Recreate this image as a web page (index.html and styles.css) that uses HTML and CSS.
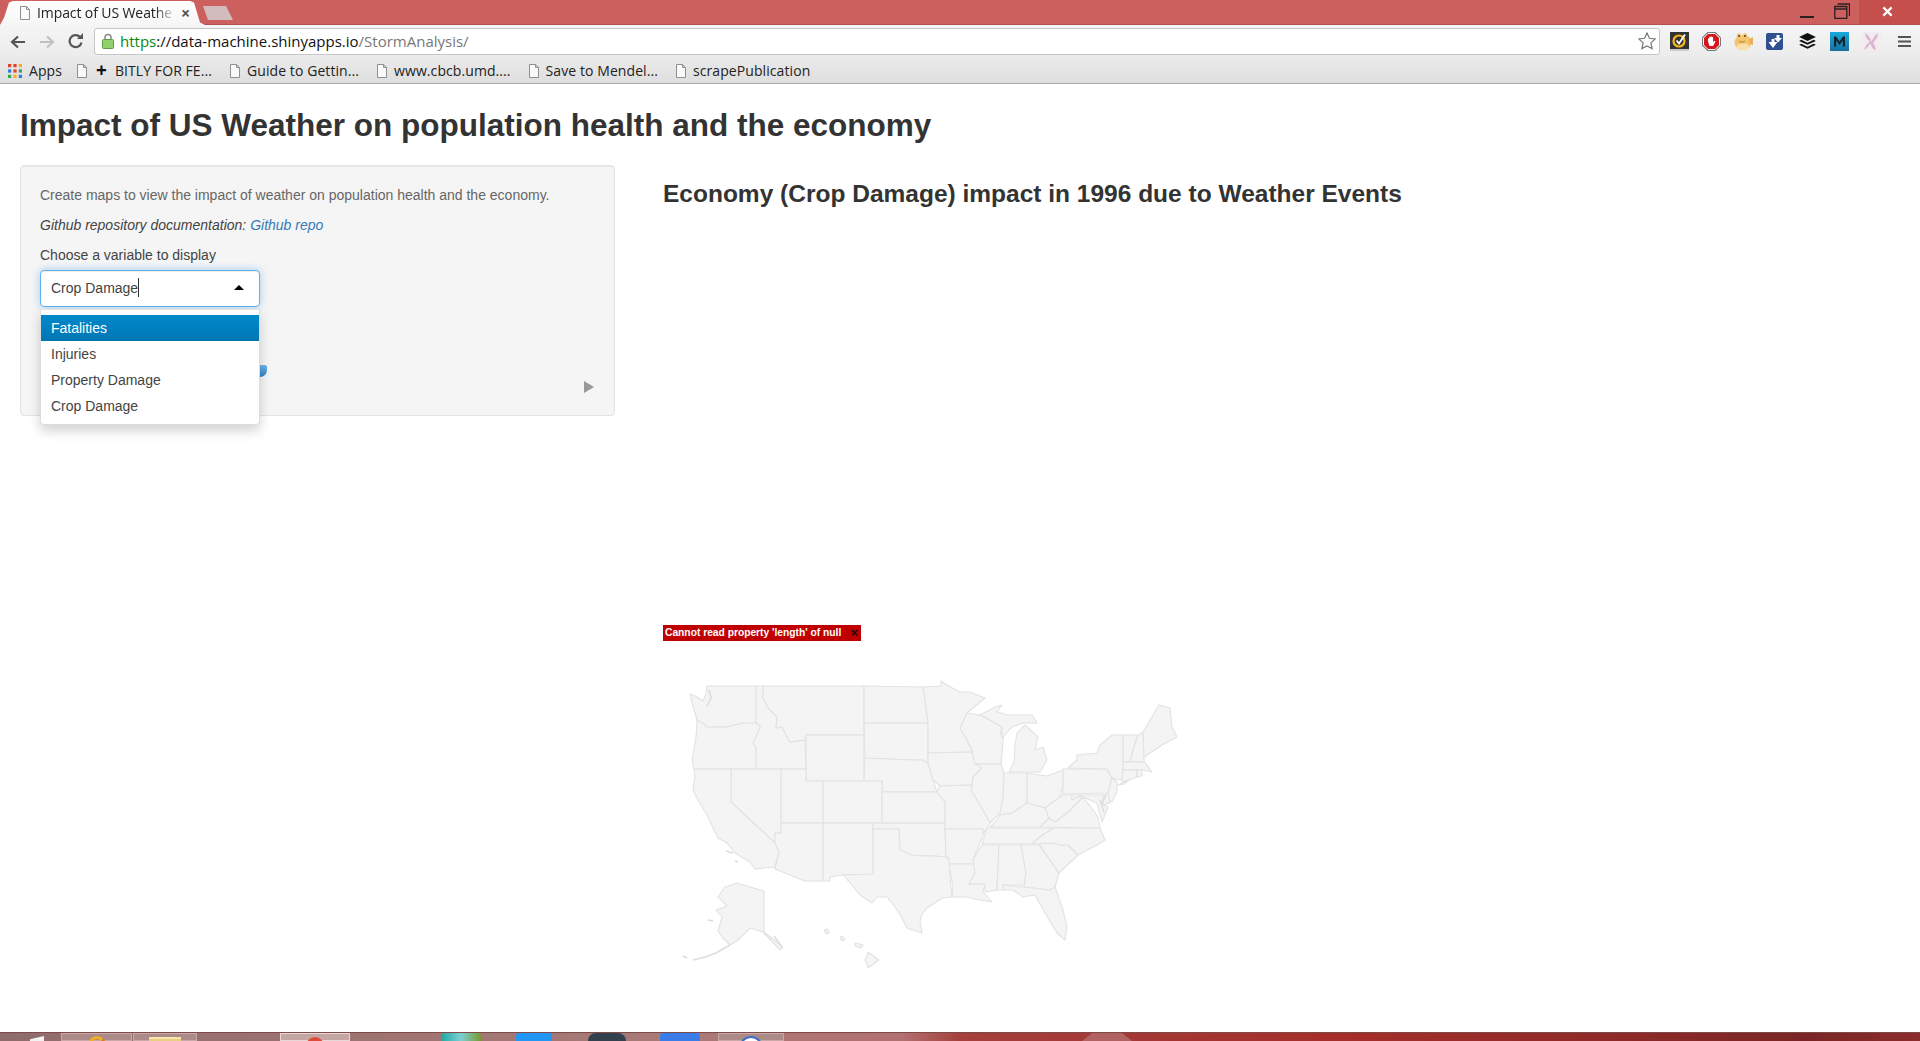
FILE: index.html
```html
<!DOCTYPE html>
<html lang="en">
<head>
<meta charset="utf-8">
<title>Impact of US Weather on population health and the economy</title>
<link rel="stylesheet" href="styles.css">
</head>
<body>
<div class="browser">
  <header class="titlebar">
    <div class="tab">
      <svg class="page-icon tab-page" viewBox="0 0 12 14"><path d="M1.5.5h6l3 3v10h-9z M7.5.5v3h3"/></svg>
      <span class="tab-title">Impact of US Weathe</span>
      <span class="tab-close">×</span>
    </div>
    <div class="newtab"></div>
    <div class="winctl">
      <span class="win-min"></span>
      <svg class="win-max" viewBox="0 0 16 16"><path d="M3.5 1h12v12M.8 3.5h12v12H.8zM.8 6h12" /></svg>
      <span class="win-close"><svg viewBox="0 0 12 12"><path d="M1.5 1.5l9 9M10.5 1.5l-9 9"/></svg></span>
    </div>
  </header>

  <nav class="toolbar">
    <svg class="nav nav-back" viewBox="0 0 16 14"><path d="M15 7H3M8 1.500 2 7l6 5.500"/></svg>
    <svg class="nav nav-fwd" viewBox="0 0 16 14"><path d="M1 7h12M8 1.500 14 7l-6 5.500"/></svg>
    <svg class="nav nav-reload" viewBox="0 0 16 16"><path d="M13.500 9.500A6 6 0 1 1 12 4"/><path class="solid" d="M9 6h6V0z"/></svg>
    <div class="omnibox">
      <svg class="lock" viewBox="0 0 12 16"><path class="lock-shackle" d="M3 7V4.500a3 3 0 0 1 6 0V7"/><rect class="lock-body" x=".5" y="6.500" width="11" height="9" rx="1"/></svg>
      <span class="url"><span class="url-https">https</span>://data-machine.shinyapps.io<span class="url-path">/StormAnalysis/</span></span>
      <svg class="star" viewBox="0 0 18 18"><path d="M9 1l2.400 5.300 5.800.7-4.300 3.900 1.200 5.700L9 13.900l-5.100 2.700 1.200-5.700L.8 7l5.800-.7z"/></svg>
    </div>
    <div class="extensions">
      <svg class="ext" viewBox="0 0 19 19"><rect width="19" height="17" fill="#333"/><rect y="17" width="19" height="2" fill="#ccc"/><circle cx="9" cy="9" r="5.500" fill="none" stroke="#f5b81c" stroke-width="2.200"/><path d="M6.500 8.500l2.500 3 6-9" fill="none" stroke="#fff" stroke-width="1.800"/></svg>
      <svg class="ext" viewBox="0 0 19 19"><path d="M5.500 0h8L19 5.500v8L13.500 19h-8L0 13.500v-8z" fill="#777"/><path d="M6 1.500h7L17.500 6v7L13 17.500H6L1.500 13V6z" fill="#d8151c" stroke="#fff"/><path d="M6 9.500V6.500h1.200v2V5h1.300v3V4.500h1.300V8V5h1.300v5l1.500-1.300.9.700-2.400 4.600H7.500z" fill="#fff"/></svg>
      <svg class="ext" viewBox="0 0 19 19"><ellipse cx="9" cy="10.500" rx="8.500" ry="7.500" fill="#f4c56c"/><ellipse cx="9" cy="15" rx="6.500" ry="3.500" fill="#f9e0ac"/><circle cx="5" cy="3.500" r="2.200" fill="#f4c56c"/><circle cx="11" cy="3.500" r="2.200" fill="#f4c56c"/><circle cx="5" cy="4" r="1" fill="#543"/><circle cx="11" cy="4" r="1" fill="#543"/><path d="M15 7l4-2v8l-3-1z" fill="#e8b05a"/><path d="M5 9c2 1.500 4 1.500 6 0" fill="none" stroke="#b07c30"/></svg>
      <svg class="ext ext-s" viewBox="0 0 17 17"><rect width="17" height="17" rx="2" fill="#2f4f8f"/><path d="M2.500 9h3V6h3v3h3l-4.500 6zM8 5h2.500V2h3v3H16l-4 4.500z" fill="#fff"/></svg>
      <svg class="ext" viewBox="0 0 17 17"><path d="M8.500 1L16 4.500 8.500 8 1 4.500z" fill="#111"/><path d="M3 7l5.500 2.700L14 7l2 1-7.500 3.500L1 8z" fill="#111"/><path d="M3 10.500l5.500 2.700 5.500-2.700 2 1L8.500 15 1 11.500z" fill="#111"/></svg>
      <svg class="ext" viewBox="0 0 19 19"><defs><linearGradient id="mg" x1="0" y1="0" x2="0" y2="1"><stop offset="0" stop-color="#19a8dc"/><stop offset="1" stop-color="#1a6f9c"/></linearGradient></defs><rect width="19" height="19" fill="url(#mg)"/><path d="M4 14.500V4.500h2l3.500 5 3.500-5h2v10h-2.200V8.500L9.500 13 6.200 8.500v6z" fill="#123"/></svg>
      <svg class="ext" viewBox="0 0 18 18"><rect width="18" height="18" fill="#f1ecef"/><path d="M3 1c3 2 5 5 6 8 2-3 3-6 6-8 0 4-2 7-4.500 9 1 2 2.500 4 2.500 7-3 0-4-3-5-6-2 2-3 5-6 6 1-4 3-6 5.500-8C5 7 3 5 3 1z" fill="#dcb4d4"/></svg>
      <svg class="menu-icon" viewBox="0 0 13 13"><path d="M0 2h13M0 6.500h13M0 11h13"/></svg>
    </div>
  </nav>

  <nav class="bookmarks">
    <span class="bm bm-apps">
      <svg class="apps-icon" viewBox="0 0 13 13">
        <rect width="3" height="3" fill="#e0452c"/><rect x="5" width="3" height="3" fill="#e0452c"/><rect x="10" width="3" height="3" fill="#f2b01e"/>
        <rect y="5" width="3" height="3" fill="#2f7de1"/><rect x="5" y="5" width="3" height="3" fill="#e0452c"/><rect x="10" y="5" width="3" height="3" fill="#34a853"/>
        <rect y="10" width="3" height="3" fill="#34a853"/><rect x="5" y="10" width="3" height="3" fill="#f2b01e"/><rect x="10" y="10" width="3" height="3" fill="#2f7de1"/>
      </svg>Apps</span>
    <span class="bm"><svg class="page-icon" viewBox="0 0 12 14"><path d="M1.500.5h6l3 3v10h-9z M7.500.5v3h3"/></svg><b class="plus">+</b>BITLY FOR FE...</span>
    <span class="bm"><svg class="page-icon" viewBox="0 0 12 14"><path d="M1.500.5h6l3 3v10h-9z M7.500.5v3h3"/></svg>Guide to Gettin...</span>
    <span class="bm"><svg class="page-icon" viewBox="0 0 12 14"><path d="M1.500.5h6l3 3v10h-9z M7.500.5v3h3"/></svg>www.cbcb.umd....</span>
    <span class="bm"><svg class="page-icon" viewBox="0 0 12 14"><path d="M1.500.5h6l3 3v10h-9z M7.500.5v3h3"/></svg>Save to Mendel...</span>
    <span class="bm"><svg class="page-icon" viewBox="0 0 12 14"><path d="M1.500.5h6l3 3v10h-9z M7.500.5v3h3"/></svg>scrapePublication</span>
  </nav>

  <main class="page">
    <h1 class="app-title">Impact of US Weather on population health and the economy</h1>
    <div class="app-row">
      <aside class="panel">
        <p class="help">Create maps to view the impact of weather on population health and the economy.</p>
        <p class="docs">Github repository documentation: <a class="repo" href="#">Github repo</a></p>
        <label class="field-label">Choose a variable to display</label>
        <div class="select-wrap">
          <div class="select-box"><span class="select-value">Crop Damage</span><span class="cursor"></span><span class="caret"></span></div>
          <ul class="dropdown">
            <li class="option active">Fatalities</li>
            <li class="option">Injuries</li>
            <li class="option">Property Damage</li>
            <li class="option">Crop Damage</li>
          </ul>
        </div>
        <div class="slider"><span class="slider-handle"></span></div>
        <div class="play-row"><span class="play"></span></div>
      </aside>
      <section class="plot">
        <h3 class="plot-title">Economy (Crop Damage) impact in 1996 due to Weather Events</h3>
        <div class="error-bar"><span class="error-text">Cannot read property 'length' of null</span><span class="error-x">×</span></div>
        <svg class="map" viewBox="663 670 540 310" width="540" height="310">
          <g class="states">
            <path d="M707 686L756 686L756 723L760 725L743 723L727 727L712 727L707 727L703 723L697 720L695 713L693 707L690 694L697 697L703 701L706 694z"/>
            <path d="M697 720L703 723L707 727L727 727L743 723L756 723L760 726L760 728L753 743L756 747L756 769L694 769L692 760L694 749L696 737z"/>
            <path d="M756 686L763 686L763 698L769 709L777 717L776 728L782 727L786 735L790 742L805 740L806 769L756 769L756 747L753 743L760 728L760 725L756 723z"/>
            <path d="M763 686L864 686L864 735L806 735L805 740L790 742L786 735L782 727L776 728L777 717L769 709L763 698z"/>
            <path d="M806 735L864 735L864 781L806 781z"/>
            <path d="M864 686L923 687L925 700L928 723L864 723z"/>
            <path d="M864 723L928 723L928 753L928 763L922 760L912 760L865 758z"/>
            <path d="M865 758L912 760L922 760L928 763L933 780L937 792L882 792L882 781L864 781z"/>
            <path d="M823 781L882 781L882 823L823 823z"/>
            <path d="M781 769L806 769L806 781L823 781L823 823L781 823z"/>
            <path d="M731 769L781 769L781 833L775 833L775 843L731 802z"/>
            <path d="M694 769L731 769L731 802L775 843L779 852L775 867L755 869L750 862L743 858L735 853L727 843L718 838L713 828L707 815L698 800L693 790L695 777z"/>
            <path d="M781 823L823 823L823 881L805 881L775 869L779 852L775 843L775 833L781 833z"/>
            <path d="M823 823L873 823L873 874L843 875L830 877L830 881L823 881z"/>
            <path d="M873 823L945 823L946 857L935 856L923 856L912 855L900 850L899 829L873 829z"/>
            <path d="M882 792L937 792L945 802L945 823L882 823z"/>
            <path d="M873 829L899 829L900 850L912 855L923 856L935 856L946 857L950 860L950 877L952 897L942 898L927 908L922 914L920 922L922 933L907 928L901 916L895 907L887 897L877 897L872 903L860 895L852 885L843 875L873 874z"/>
            <path d="M923 687L941 686L941 681L945 684L960 692L970 692L985 698L967 713L960 728L966 738L972 750L972 752L928 753L928 723L925 700z"/>
            <path d="M928 753L972 752L982 768L973 777L972 785L940 786L933 780L928 763z"/>
            <path d="M967 713L980 715L990 720L1002 727L1000 735L1004 730L1003 742L1001 764L975 764L972 752L972 750L966 738L960 728z"/>
            <path d="M975 764L1001 764L1004 773L1003 798L1000 813L990 823L980 805L971 790L972 785L973 777L982 768z"/>
            <path d="M1004 773L1027 773L1027 803L1012 813L1000 815L1000 813L1003 798z"/>
            <path d="M1027 773L1047 776L1063 770L1063 785L1060 797L1045 808L1027 803z"/>
            <path d="M1009 772L1040 772L1047 760L1043 747L1035 750L1038 737L1025 725L1017 733L1015 745L1014 762z"/>
            <path d="M980 715L995 707L1002 705L997 712L1008 715L1032 715L1037 723L1023 723L1012 727L1002 738L1002 727L990 720z"/>
            <path d="M940 786L972 785L971 790L980 805L990 823L983 834L983 829L945 829L945 802L937 792z"/>
            <path d="M945 829L983 829L983 835L973 860L974 864L949 864L949 857L946 857z"/>
            <path d="M949 864L974 864L975 873L969 884L985 884L983 892L992 902L975 899L967 897L952 897L953 887z"/>
            <path d="M982 845L999 845L997 890L985 892L985 884L969 884L975 873L973 860z"/>
            <path d="M999 845L1021 845L1026 873L1024 885L1003 885L1004 890L997 890z"/>
            <path d="M1021 845L1039 845L1059 873L1055 887L1050 890L1024 887L1026 873z"/>
            <path d="M1003 885L1024 887L1050 890L1055 887L1063 910L1067 927L1065 940L1057 933L1045 913L1035 895L1023 897L1013 890L1004 890z"/>
            <path d="M1039 844L1053 843L1060 845L1068 845L1078 855L1059 873z"/>
            <path d="M987 828L1053 828L1040 837L1032 844L982 844z"/>
            <path d="M1053 828L1100 828L1105 840L1097 845L1078 855L1068 845L1060 845L1053 843L1032 844L1040 837z"/>
            <path d="M1040 827L1049 818L1055 822L1068 812L1083 797L1093 810L1098 817L1100 828z"/>
            <path d="M990 827L1040 827L1049 818L1045 808L1027 803L1012 813L1000 815L995 822z"/>
            <path d="M1045 808L1060 797L1063 795L1072 795L1072 800L1080 796L1083 797L1068 812L1055 822L1049 818z"/>
            <path d="M1063 769L1107 769L1112 778L1108 793L1063 794z"/>
            <path d="M1068 768L1077 760L1077 755L1097 753L1100 745L1112 735L1123 735L1123 770L1122 780L1112 778L1107 769z"/>
            <path d="M1118 785L1132 778L1124 784z"/>
            <path d="M1112 778L1117 782L1117 792L1112 802L1106 798L1108 793z"/>
            <path d="M1105 795L1108 793L1110 803L1103 805L1103 795z"/>
            <path d="M1072 795L1103 795L1103 805L1108 807L1102 822L1097 803L1083 797L1080 796L1072 800z"/>
            <path d="M1123 735L1138 735L1133 750L1130 762L1123 762z"/>
            <path d="M1138 735L1143 732L1144 757L1144 762L1130 762L1133 750z"/>
            <path d="M1143 732L1150 720L1159 705L1170 708L1172 727L1177 737L1162 745L1144 757z"/>
            <path d="M1123 762L1145 762L1152 772L1143 770L1123 770z"/>
            <path d="M1123 770L1137 770L1137 777L1122 782z"/>
            <path d="M1137 770L1142 770L1142 776L1137 777z"/>
            <path d="M737 883L764 891L764 932L783 947L780 950L763 932L750 928L738 940L730 945L722 937L718 931L722 917L716 910L727 906L718 897L725 887z"/>
            <path d="M868 952L879 960L868 968L865 960z"/>
            <path d="M824 931L827 929L829 932L827 934z"/>
            <path d="M841 936L845 939L843 941L840 939z"/>
            <path d="M855 943L863 945L861 948L855 946z"/>
          </g>
          <g class="map-detail">
            <path d="M709 690L711 698L707 706"/>
            <path d="M774 936L782 947"/>
            <path d="M1106 795L1101 805M1100 800L1104 812"/>
            <path d="M730 945L716 953L705 957L693 960M683 956L687 958"/>
            <path d="M708 920L713 921M726 851L733 853M735 861L738 862"/>
          </g>
        </svg>
      </section>
    </div>
  </main>

  <footer class="taskbar">
    <span class="tb-start"></span>
    <span class="tb-btn tb-ie"><i class="ie-arc"></i></span>
    <span class="tb-btn tb-folder"><i class="folder-top"></i></span>
    <span class="tb-btn tb-active"><i class="dot-red"></i></span>
    <span class="tb-gem"></span>
    <span class="tb-blue"></span>
    <span class="tb-dark"></span>
    <span class="tb-blue2"></span>
    <span class="tb-btn tb-last"><i class="dot-white"></i></span>
    <span class="tb-tri"></span>
  </footer>
</div>
</body>
</html>
```
FILE: styles.css
```css
* { box-sizing: border-box; }
html, body { margin: 0; padding: 0; height: 100%; overflow: hidden; background: #fff; }
body { font-family: "Liberation Sans", Arial, sans-serif; font-size: 14px; line-height: 20px; color: #333; }

.browser { height: 1041px; width: 1920px; display: flex; flex-direction: column; }

/* title bar */
.titlebar { height: 25px; flex: none; background: #cc605e; display: flex; align-items: flex-end; position: relative; border-bottom: 1px solid #b05452; }
.tab { width: 205px; height: 24px; margin-bottom: -1px; background: linear-gradient(#fff, #f6f6f6); clip-path: polygon(0 100%, 4px 70%, 9px 6%, 13px 0, 190px 0, 194px 6%, 200px 90%, 205px 100%); display: flex; align-items: center; padding-left: 19px; font-family: "Open Sans", sans-serif; font-size: 14px; color: #222; }
.tab-page { margin-right: 4px; }
.tab-title { width: 139px; white-space: nowrap; overflow: hidden; letter-spacing: -.1px; -webkit-mask-image: linear-gradient(90deg, #000 85%, transparent); mask-image: linear-gradient(90deg, #000 85%, transparent); }
.tab-close { margin-left: 5px; font-size: 16px; font-weight: 700; color: #555; line-height: 1; }
.newtab { width: 30px; height: 14px; margin: 0 0 4px -2px; background: #d3bcbd; clip-path: polygon(0 0, 23px 0, 30px 100%, 5px 100%); }
.winctl { margin-left: auto; align-self: stretch; display: flex; }
.win-min { width: 14px; height: 2px; background: #2b2020; margin: 16px 20px 0 0; }
.win-max { width: 16px; height: 16px; margin: 3px 9px 0 0; fill: none; stroke: #2b2020; stroke-width: 1.300; }
.win-close { width: 61px; height: 24px; background: #c44f4d; display: flex; align-items: center; justify-content: center; padding: 0 5px 2px 0; }
.win-close svg { width: 11px; height: 11px; fill: none; stroke: #fff; stroke-width: 2.400; }

/* toolbar */
.toolbar { height: 31px; flex: none; background: linear-gradient(#f5f5f5, #ececec); display: flex; align-items: center; padding: 1px 0 0 10px; }
.nav { fill: none; stroke-width: 2.200; }
.nav-back { width: 16px; height: 14px; stroke: #555; margin-top: 1px; }
.nav-fwd { width: 16px; height: 14px; stroke: #c0c0c0; margin: 1px 0 0 13px; }
.nav-reload { width: 16px; height: 16px; stroke: #555; margin: 0 0 0 13px; }
.solid { fill: #555; stroke: none; }
.omnibox { width: 1566px; height: 27px; margin: 0 0 0 10px; background: #fff; border: 1px solid #c6c6c6; border-radius: 3px; display: flex; align-items: center; padding-left: 7px; }
.lock { width: 12px; height: 16px; flex: none; }
.lock-shackle { fill: none; stroke: #8a8a8a; stroke-width: 1.500; }
.lock-body { fill: #8ed06a; stroke: #5f9e45; }
.url { margin-left: 6px; font-family: "Open Sans", sans-serif; font-size: 15px; color: #111; }
.url-https { color: #0a8a0a; }
.url-path { color: #777; }
.star { width: 18px; height: 18px; margin-left: auto; margin-right: 3px; fill: #fff; stroke: #777; stroke-width: 1.200; }
.extensions { display: flex; align-items: center; margin-left: 10px; }
.ext { width: 19px; height: 19px; margin-right: 13px; flex: none; }
.ext-s { width: 17px; height: 17px; margin-right: 15px; }
.menu-icon { width: 13px; height: 13px; margin-left: 4px; stroke: #555; stroke-width: 2.200; }

/* bookmarks */
.bookmarks { height: 28px; flex: none; background: linear-gradient(#ebebeb, #dedede); border-bottom: 1px solid #a8a8a8; display: flex; align-items: center; padding: 2px 0 0 8px; font-family: "Open Sans", sans-serif; font-size: 14px; letter-spacing: .08px; color: #222; white-space: nowrap; }
.bm { display: flex; align-items: center; margin-right: 17px; }
.bm-apps { margin-right: 14px; }
.apps-icon { width: 14px; height: 14px; margin-right: 7px; }
.page-icon { width: 12px; height: 14px; margin-right: 6px; flex: none; fill: #fafafa; stroke: #8f8f8f; stroke-width: 1; }
.plus { font-size: 19px; font-weight: 700; color: #111; margin: 0 8px 0 2px; line-height: 1; }

/* page */
.page { flex: 1; min-height: 0; padding: 0 20px; overflow: hidden; background: #fff; }
.app-title { margin: 20px 0 0; font-size: 31.500px; line-height: 42px; font-weight: 700; color: #333; white-space: nowrap; }
.app-row { display: flex; margin-top: 19px; }
.panel { width: 595px; height: 251px; flex: none; padding: 19px; background: #f5f5f5; border: 1px solid #e3e3e3; border-radius: 4px; box-shadow: inset 0 1px 1px rgba(0,0,0,.05); }
.help { margin: 0 0 10px; color: #666; }
.docs { margin: 0 0 10px; font-style: italic; color: #444; }
.repo { color: #337ab7; text-decoration: none; }
.field-label { display: block; height: 20px; margin: 0 0 5px; color: #444; }
.select-wrap { position: relative; width: 220px; }
.select-box { height: 37px; background: #fff; border: 1px solid #66afe9; border-radius: 4px; box-shadow: inset 0 1px 1px rgba(0,0,0,.075), 0 0 8px rgba(102,175,233,.6); display: flex; align-items: center; padding: 0 0 2px 10px; position: relative; }
.select-value { color: #444; }
.cursor { width: 1px; height: 19px; background: #333; }
.caret { position: absolute; right: 15px; top: 14px; width: 0; height: 0; border-left: 5px solid transparent; border-right: 5px solid transparent; border-bottom: 5px solid #000; }
.dropdown { position: absolute; z-index: 5; left: 0; top: 39px; width: 220px; margin: 0; padding: 5px 0 0; list-style: none; height: 116px; background: #fff; border: 1px solid #ddd; border-top-color: #e4e4e4; border-radius: 0 0 4px 4px; box-shadow: 0 6px 12px rgba(0,0,0,.175); color: #444; }
.option { height: 26px; padding: 3px 10px; line-height: 20px; }
.option.active { color: #fff; background: linear-gradient(#0088cc, #0077b3); }
.slider { height: 12px; margin-top: 58px; padding-left: 213px; }
.slider-handle { display: block; width: 14px; height: 12px; background: linear-gradient(#6fb6ea, #2e7fc4); border-radius: 2px 2px 7px 2px; }
.play-row { display: flex; justify-content: flex-end; margin: 4px 1px 0 0; }
.play { width: 0; height: 0; border-left: 10px solid #999; border-top: 6px solid transparent; border-bottom: 6px solid transparent; }

.plot { margin-left: 48px; width: 600px; }
.plot-title { margin: 14px 0 0; font-size: 24.500px; line-height: 30px; font-weight: 700; color: #333; white-space: nowrap; }
.error-bar { width: 198px; height: 16px; margin-top: 416px; background: #c00000; display: flex; align-items: center; justify-content: space-between; padding: 0 3px 0 2px; font-size: 10.250px; font-weight: 700; line-height: 16px; color: #fff; }
.error-text { white-space: nowrap; }
.error-x { color: #111; font-size: 13px; }
.map { display: block; margin-top: 29px; }
.states path { fill: #f4f4f4; stroke: #e2e2e2; stroke-width: 1.100; stroke-linejoin: round; }
.map-detail path { fill: none; stroke: #dcdcdc; stroke-width: 1.500; }

/* taskbar */
.taskbar { height: 9px; flex: none; overflow: hidden; position: relative; display: flex; align-items: flex-start; border-top: 1px solid #7d4a48; background: linear-gradient(90deg, #8f6c6c 0, #9e7472 20%, #a87a78 35%, #b27070 47%, #a5403c 50%, #a33a36 56%, #a52e2a 70%, #8c2a28 85%, #7a2626 94%, #8c2c2c 100%); }
.tb-start { width: 14px; height: 8px; margin: 3px 0 0 30px; background: #f2f2f2; clip-path: polygon(0 40%, 100% 0, 100% 100%, 0 100%); }
.tb-btn { height: 8px; border: 1px solid #c9a9a7; background: #ab8a88; display: flex; justify-content: center; }
.tb-ie { width: 71px; margin-left: 17px; }
.ie-arc { width: 18px; height: 18px; border-radius: 50%; border: 3px solid #f0b020; border-right-color: #e07a1c; margin-top: 2px; }
.tb-folder { width: 64px; margin-left: 1px; }
.folder-top { width: 32px; height: 8px; margin-top: 3px; background: #e9cf80; border-top: 2px solid #f5e6b0; }
.tb-active { width: 70px; margin-left: 83px; background: #c4a6a2; border-color: #e6d8d6; }
.dot-red { width: 18px; height: 18px; border-radius: 50%; background: #dd4b39; margin-top: 3px; }
.tb-gem { width: 40px; height: 8px; margin-left: 91px; background: linear-gradient(90deg, #1fa9a0 0, #7ccfd4 50%, #7a9a2c 100%); border-radius: 4px 4px 0 0; }
.tb-blue { width: 36px; height: 8px; margin-left: 35px; background: #2196f3; border-radius: 3px 3px 0 0; }
.tb-dark { width: 38px; height: 8px; margin-left: 36px; background: #33414e; border-radius: 12px 12px 0 0; }
.tb-blue2 { width: 40px; height: 8px; margin-left: 34px; background: #3b7de8; border-radius: 3px 3px 0 0; }
.tb-last { width: 66px; margin-left: 18px; }
.dot-white { width: 24px; height: 24px; border-radius: 50%; background: #fff; border: 2px solid #3c6fc4; margin-top: 2px; }
.tb-tri { width: 50px; height: 8px; margin-left: 298px; background: #b06260; clip-path: polygon(20% 0, 80% 0, 100% 100%, 0 100%); }
```
